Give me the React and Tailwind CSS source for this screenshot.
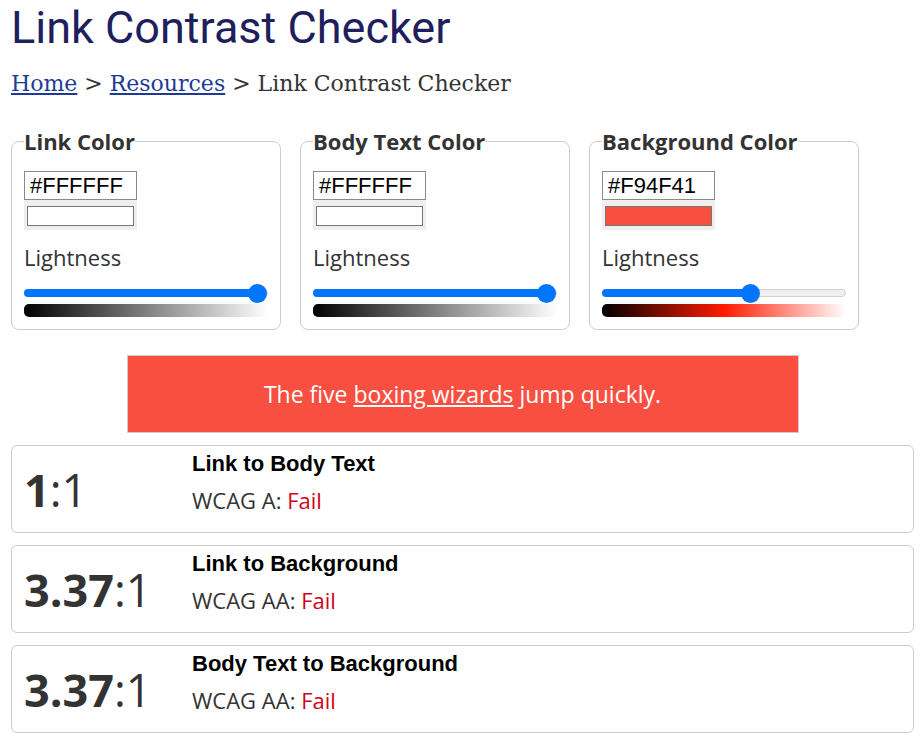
import React from "react";

const pickers = [
  { id: "link", label: "Link Color", hex: "#FFFFFF", lightness: 100, gradient: "bg-[linear-gradient(to_right,#000,#fff)]" },
  { id: "body", label: "Body Text Color", hex: "#FFFFFF", lightness: 100, gradient: "bg-[linear-gradient(to_right,#000,#fff)]" },
  { id: "bg", label: "Background Color", hex: "#F94F41", lightness: 62, gradient: "bg-[linear-gradient(to_right,#000,#ff1a00_50%,#fff)]" },
];

const results = [
  { ratio: "1", title: "Link to Body Text", level: "WCAG A" },
  { ratio: "3.37", title: "Link to Background", level: "WCAG AA" },
  { ratio: "3.37", title: "Body Text to Background", level: "WCAG AA" },
];

function Slider({ value }) {
  // thumb travels between its radius on each side of the 243px track
  const center = 9.5 + (value / 100) * (243 - 19);
  return (
    <div className="relative h-[20px] mt-[11px]">
      <div className="absolute left-0 right-0 top-[6px] h-[8px] rounded-full bg-[#efefef] border border-[#d0d0d0]" />
      <div className="absolute left-0 top-[6px] h-[8px] rounded-full bg-[#0075ff]" style={{ width: center }} />
      <div className="absolute top-[0.5px] w-[19px] h-[19px] rounded-full bg-[#0075ff]" style={{ left: center - 9.5 }} />
    </div>
  );
}

function ColorPicker({ label, hex, lightness, gradient }) {
  return (
    <fieldset className="w-[270px] border border-[#cccccc] rounded-[8px] px-[12px] pb-[12px]">
      <legend className="font-bold text-[22px] leading-[30px] text-[#333]">{label}</legend>
      <div className="mt-[15px] w-[113px] h-[29px] border border-[#8a8a8a] px-[5px] font-['Liberation_Sans',Arial,sans-serif] text-[22px] leading-[27px] text-black">
        {hex}
      </div>
      <div className="w-[113px] h-[30px] bg-[#efefef] px-[3px] pt-[6px]">
        <div className="h-[20px] border border-[#777]" style={{ background: hex }} />
      </div>
      <div className="mt-[12px] text-[22px] leading-[30px] text-[#333]">Lightness</div>
      <Slider value={lightness} />
      <div className={`mt-[1px] h-[13px] rounded-[5px] ${gradient}`} />
    </fieldset>
  );
}

function ResultCard({ ratio, title, level }) {
  return (
    <div className="flex h-[88px] border border-[#cccccc] rounded-[6px] px-[12px]">
      <div className="w-[168px] flex items-center text-[45px] text-[#333] leading-none">
        <span className="font-bold">{ratio}</span>
        <span>:1</span>
      </div>
      <div className="pt-[5px]">
        <div className="font-['Liberation_Sans',Arial,sans-serif] font-bold text-[22px] leading-[26px] text-black">{title}</div>
        <div className="mt-[8px] text-[22px] leading-[30px] text-[#333]">
          {level}: <span className="text-[#d0021b]">Fail</span>
        </div>
      </div>
    </div>
  );
}

export default function App() {
  return (
    <div className="min-h-screen bg-white font-['Open_Sans',sans-serif]">
      <div className="ml-[11px] w-[903px]">
        <h1 className="pt-[2px] font-['Roboto',sans-serif] text-[45px] leading-[52px] text-[#1e1f5c]">
          Link Contrast Checker
        </h1>
        <nav className="mt-[15px] font-['DejaVu_Serif',serif] text-[22px] leading-[30px] text-[#333]">
          <a href="#" className="underline text-[#1d3a96]">Home</a>
          {" > "}
          <a href="#" className="underline text-[#1d3a96]">Resources</a>
          {" > Link Contrast Checker"}
        </nav>

        <div className="mt-[27px] flex gap-[19px]">
          {pickers.map((p) => (
            <ColorPicker key={p.id} {...p} />
          ))}
        </div>

        <div className="mt-[25px] mx-auto w-[672px] h-[78px] bg-[#f94f41] border border-[#cccccc] flex items-center justify-center text-white text-[23px]">
          <span>
            The five <a href="#" className="underline">boxing wizards</a> jump quickly.
          </span>
        </div>

        <div className="mt-[12px] flex flex-col gap-[12px]">
          {results.map((r) => (
            <ResultCard key={r.title} {...r} />
          ))}
        </div>
      </div>
    </div>
  );
}
